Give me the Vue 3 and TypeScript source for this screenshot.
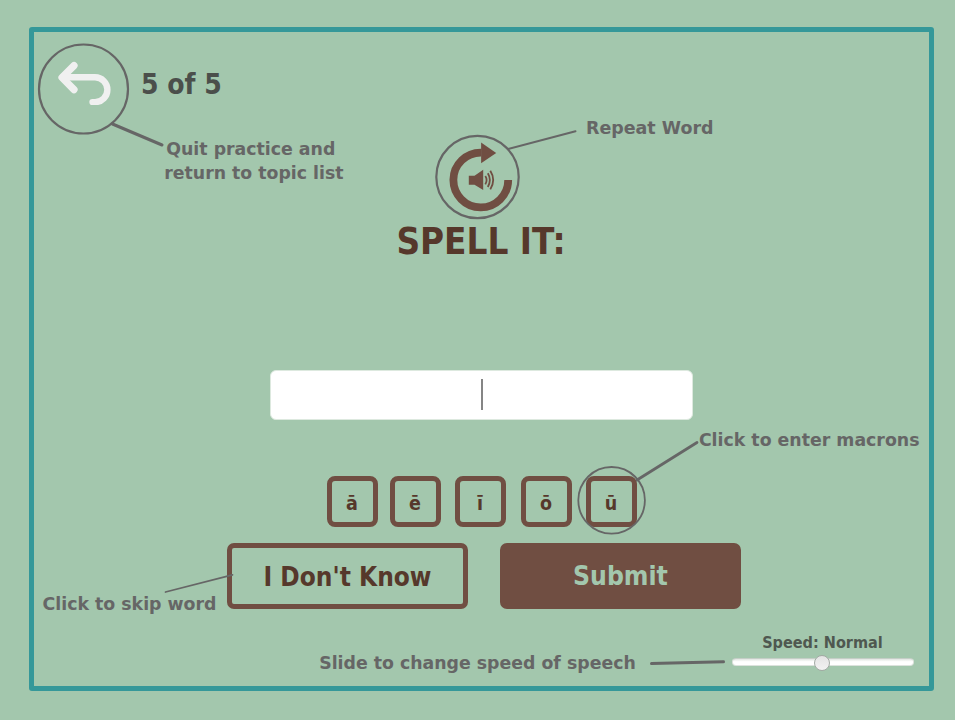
<script setup lang="ts">
import { ref } from 'vue'

interface Label { text: string; x: number; y: number; width: number }
interface Line { x1: number; y1: number; x2: number; y2: number; w: number }
interface Ring { cx: number; cy: number; r: number; w: number }

const macrons: string[] = ['ā', 'ē', 'ī', 'ō', 'ū']
const answer = ref('')
const current = 5
const total = 5

const labels: Label[] = [
  { text: 'Quit practice and', x: 166.3, y: 155, width: 169 },
  { text: 'return to topic list', x: 164.3, y: 179, width: 179.2 },
  { text: 'Repeat Word', x: 586, y: 134, width: 127.5 },
  { text: 'Click to enter macrons', x: 698.9, y: 446, width: 220.6 },
  { text: 'Click to skip word', x: 42.5, y: 610, width: 174 },
  { text: 'Slide to change speed of speech', x: 319.2, y: 669, width: 316.6 },
]
const lines: Line[] = [
  { x1: 112.5, y1: 124, x2: 162, y2: 145, w: 3 },
  { x1: 508, y1: 149, x2: 575.5, y2: 131.2, w: 2 },
  { x1: 637, y1: 480, x2: 697, y2: 442.5, w: 2.8 },
  { x1: 165.5, y1: 592, x2: 232.5, y2: 574.8, w: 1.8 },
  { x1: 651.5, y1: 663.6, x2: 723.5, y2: 661.8, w: 3 },
]
const rings: Ring[] = [
  { cx: 83.5, cy: 89, r: 44.5, w: 2.2 },
  { cx: 477.5, cy: 177, r: 41.2, w: 2.2 },
  { cx: 611.6, cy: 500.3, r: 33.3, w: 1.8 },
]

function insert(letter: string): void {
  answer.value += letter
}
</script>

<template>
  <main class="page">
    <section class="frame">
      <header class="top">
        <button class="back" aria-label="Quit">
          <svg width="54" height="44" viewBox="0 0 54 44">
            <path d="M6 16.3 H38 a12.4 12.4 0 0 1 0 24.8 H35.5" />
            <path class="head" d="M17 4.6 L5 16.5 L17 28.6" />
          </svg>
        </button>
        <span class="progress">{{ current }} of {{ total }}</span>
      </header>

      <button class="repeat" aria-label="Repeat">
        <svg width="64" height="70" viewBox="448 142 64 70">
          <path class="arc" d="M507.2 180 A27.4 27.4 0 1 1 480.4 152.6" />
          <path class="solid" d="M480.1 142.6 L495.2 153 L480.1 163.3 Z" />
          <path class="solid" d="M467.8 175.8 H473.5 L482.2 169.8 V190 L473.5 184.7 H467.8 Z" />
          <path class="wave" d="M484.3 176 Q486.9 180 484.3 184.4 M486.8 173.3 Q490.9 180 486.8 187 M489.3 170.8 Q495.1 180 489.3 189.4" />
        </svg>
      </button>

      <h1 class="prompt">SPELL IT:</h1>

      <div class="answer">{{ answer }}<i class="caret"></i></div>

      <div class="keys">
        <button v-for="m in macrons" :key="m" class="key" @click="insert(m)">{{ m }}</button>
      </div>

      <div class="actions">
        <button class="action">I Don't Know</button>
        <button class="action filled">Submit</button>
      </div>

      <footer class="speed">
        <span class="speed-label">Speed: Normal</span>
        <div class="track"><span class="thumb"></span></div>
      </footer>
    </section>

    <svg class="notes" width="955" height="720" viewBox="0 0 955 720">
      <circle v-for="(c, i) in rings" :key="'c' + i" :cx="c.cx" :cy="c.cy" :r="c.r" :stroke-width="c.w" />
      <line v-for="(l, i) in lines" :key="'l' + i" :x1="l.x1" :y1="l.y1" :x2="l.x2" :y2="l.y2" :stroke-width="l.w" />
      <text v-for="t in labels" :key="t.text" :x="t.x" :y="t.y" :textLength="t.width" lengthAdjust="spacingAndGlyphs">{{ t.text }}</text>
    </svg>
  </main>
</template>

<style>
body {
  margin: 0;
  background: #a3c7ad;
}
</style>

<style scoped>
.page {
  position: relative;
  box-sizing: border-box;
  width: 955px;
  height: 720px;
  padding: 27px 21px 29px 29px;
  background: #a3c7ad;
  overflow: hidden;
  font-family: "DejaVu Sans Condensed", "DejaVu Sans", sans-serif;
  font-stretch: condensed;
  font-weight: bold;
}
.frame {
  box-sizing: border-box;
  height: 664px;
  border: 5px solid #359899;
  border-radius: 3px;
  display: flex;
  flex-direction: column;
  align-items: center;
}
button {
  box-sizing: border-box;
  padding: 0;
  border: 0;
  background: none;
  font: inherit;
  color: #56382b;
}
svg {
  display: block;
}
.top {
  align-self: stretch;
  height: 103px;
  padding: 29px 0 0 23px;
  box-sizing: border-box;
  display: flex;
  align-items: flex-start;
  gap: 30px;
}
.back path {
  fill: none;
  stroke: #f0f0f0;
  stroke-width: 6.4;
  stroke-linecap: round;
  stroke-linejoin: round;
}
.back .head {
  stroke-width: 7.2;
}
.progress {
  font-size: 28px;
  line-height: 48px;
  color: #4b4f4b;
}
.repeat {
  margin: 7px 2px 0 0;
  height: 70px;
}
.arc {
  fill: none;
  stroke: #704e42;
  stroke-width: 7.8;
}
.solid {
  fill: #704e42;
}
.wave {
  fill: none;
  stroke: #704e42;
  stroke-width: 1.8;
}
.prompt {
  margin: 9px 1px 0 0;
  font-size: 36.5px;
  line-height: 42px;
  color: #56382b;
}
.answer {
  box-sizing: border-box;
  width: 423px;
  height: 50px;
  margin-top: 107px;
  background: #fff;
  border: 1px solid #dde9df;
  border-radius: 6px;
  display: flex;
  align-items: center;
  justify-content: center;
  font-size: 26px;
}
.caret {
  width: 2px;
  height: 31px;
  margin: 0 0 2px;
  background: #858585;
}
.keys {
  display: flex;
  gap: 14px;
  margin-top: 56px;
}
.key {
  width: 51px;
  height: 51px;
  padding-top: 3px;
  border: 5px solid #704e42;
  border-radius: 8px;
  font-size: 19.5px;
}
.key:first-child {
  margin-right: -2px;
}
.key:nth-child(4) {
  margin-left: 1px;
}
.actions {
  display: flex;
  gap: 32px;
  margin: 16px 0 0 5px;
}
.action {
  width: 241px;
  height: 66px;
  padding-top: 2px;
  border: 5px solid #704e42;
  border-radius: 7px;
  font-size: 26px;
}
.filled {
  padding-top: 0;
  background: #704e42;
  color: #a3c7ad;
  font-size: 26.3px;
}
.speed {
  align-self: flex-end;
  width: 182px;
  margin: 23px 15px 0 0;
  display: flex;
  flex-direction: column;
  align-items: center;
}
.speed-label {
  margin-right: 1px;
  font-size: 16.1px;
  line-height: 22px;
  color: #4f5850;
}
.track {
  box-sizing: border-box;
  width: 182px;
  height: 8px;
  margin-top: 4px;
  border: 1px solid #dce2dd;
  border-top-color: #c5cec7;
  border-radius: 4px;
  background: linear-gradient(#e0e5e1, #fff 45%);
  display: flex;
  align-items: center;
  justify-content: center;
}
.thumb {
  box-sizing: border-box;
  flex: none;
  width: 16px;
  height: 16px;
  margin: 2px 2px 0 0;
  border: 1px solid #a2aaa4;
  border-radius: 50%;
  background: linear-gradient(#e4e4e4, #f2f2f2);
}
.notes {
  position: absolute;
  left: 0;
  top: 0;
  pointer-events: none;
}
.notes circle,
.notes line {
  fill: none;
  stroke: #666;
  stroke-linecap: round;
}
.notes text {
  fill: #666;
  font-family: "DejaVu Sans", sans-serif;
  font-stretch: normal;
  font-size: 17.2px;
}
</style>
